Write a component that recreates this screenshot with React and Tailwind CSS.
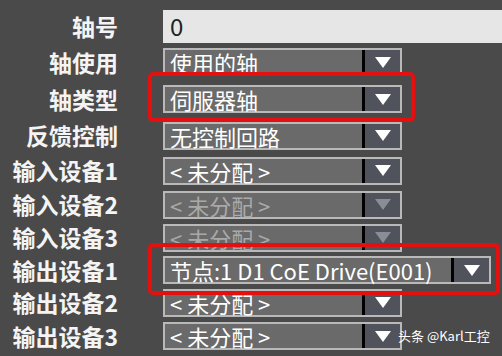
import React from 'react';

const cjk = { fontFamily: '"Noto Sans CJK SC", "Noto Sans", sans-serif' };

function Arrow({ dim }) {
  return (
    <svg width="18" height="13" viewBox="0 0 18 13">
      <polygon points="1,1 17,1 9,12" fill={dim ? '#8a8d96' : '#ffffff'} />
    </svg>
  );
}

function Select({ text, dim, wide }) {
  return (
    <div
      className={`flex h-[28px] border-2 border-[#b9b9b9] bg-[#6a6a6a] ${wide ? 'w-[328px]' : 'w-[239px]'}`}
    >
      <div
        className={`flex-1 flex items-center pl-[5px] text-[22px] leading-none whitespace-nowrap ${dim ? 'text-[#a9a9a9]' : 'text-white'}`}
      >
        {text}
      </div>
      <div className="w-[38px] flex items-center justify-center border-l-[3px] border-black bg-[#50535b]">
        <Arrow dim={dim} />
      </div>
    </div>
  );
}

const rows = [
  { label: '输入设备1', text: '< 未分配 >', h: 'h-[35px]' },
  { label: '输入设备2', text: '< 未分配 >', h: 'h-[33px]', dim: true },
  { label: '输入设备3', text: '< 未分配 >', h: 'h-[33px]', dim: true },
];

function Row({ label, h, children }) {
  return (
    <div className={`flex items-center ${h}`}>
      <div className="w-[118px] text-right text-[23px] font-semibold text-[#f4f4f4] whitespace-nowrap leading-none">
        {label}
      </div>
      <div className="ml-[45px] flex-1 flex">{children}</div>
    </div>
  );
}

export default function App() {
  return (
    <div className="relative w-[502px] h-[356px] overflow-hidden bg-[#4a4a4a]" style={cjk}>
      <div className="pt-[8px]">
        <Row label="轴号" h="h-[36px]">
          <div className="flex-1 h-[33px] bg-[#e6e6e6] flex items-center pl-[7px] text-[24px] text-[#222]">
            0
          </div>
        </Row>
        <Row label="轴使用" h="h-[36px]">
          <Select text="使用的轴" />
        </Row>
        <Row label="轴类型" h="h-[38px]">
          <Select text="伺服器轴" />
        </Row>
        <Row label="反馈控制" h="h-[35px]">
          <Select text="无控制回路" />
        </Row>
        {rows.map((r) => (
          <Row key={r.label} label={r.label} h={r.h}>
            <Select text={r.text} dim={r.dim} />
          </Row>
        ))}
        <Row label="输出设备1" h="h-[32px]">
          <Select text="节点:1 D1 CoE Drive(E001)" wide />
        </Row>
        <Row label="输出设备2" h="h-[33px]">
          <Select text="< 未分配 >" />
        </Row>
        <Row label="输出设备3" h="h-[34px]">
          <Select text="< 未分配 >" />
        </Row>
      </div>

      <div className="absolute left-[148px] top-[72px] w-[267px] h-[50px] border-4 border-[#e3100f] rounded-[5px]" />
      <div className="absolute left-[148px] top-[243px] w-[352px] h-[52px] border-4 border-[#e3100f] rounded-[5px]" />

      <div className="absolute left-[398px] top-[326px] text-[13px] text-white whitespace-nowrap">
        头条 @Karl工控
      </div>
    </div>
  );
}
